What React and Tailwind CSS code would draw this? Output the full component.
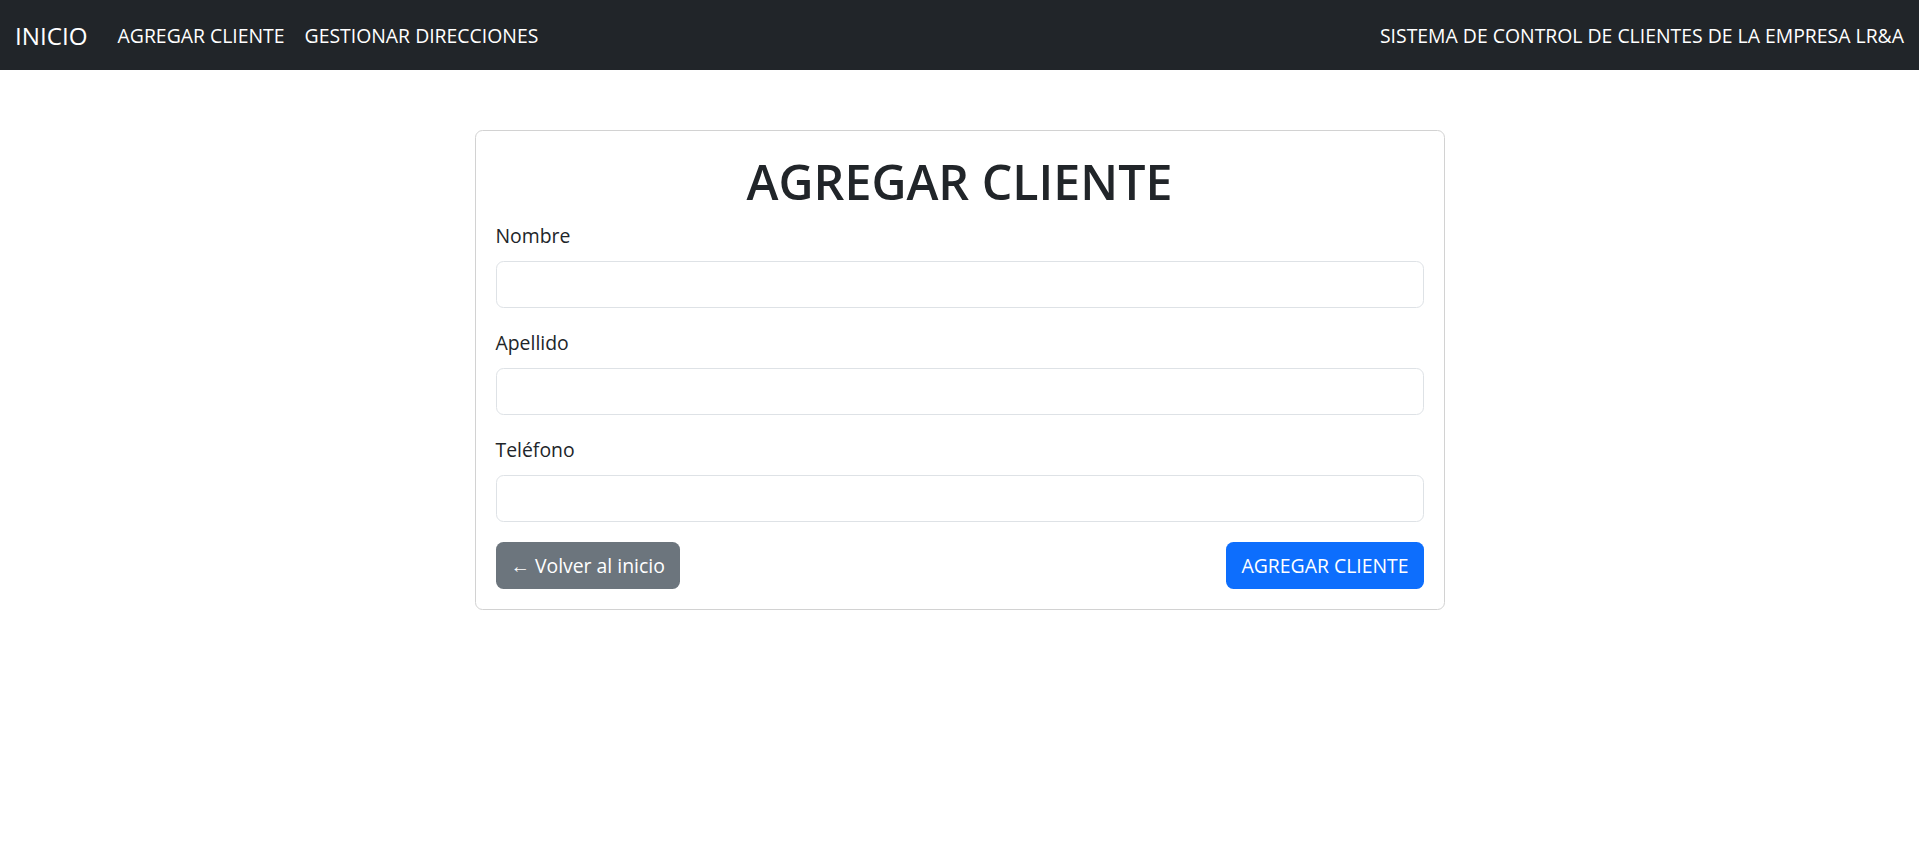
import { useState } from 'react'

const FIELDS = [
  { key: 'nombre', label: 'Nombre' },
  { key: 'apellido', label: 'Apellido' },
  { key: 'telefono', label: 'Teléfono' }
]

export default function App() {
  const [form, setForm] = useState({ nombre: '', apellido: '', telefono: '' })

  function update(key, value) {
    setForm(prev => ({ ...prev, [key]: value }))
  }

  return (
    <div className="min-h-screen bg-white text-[#212529] font-['Open_Sans',sans-serif]">
      {/* Navbar */}
      <nav className="h-[70px] bg-[#212529] flex items-center justify-between px-[15px] pt-[2px]">
        <div className="flex items-center">
          <a href="#" className="text-white text-[24.2px] leading-[1.5] mr-[20px]">INICIO</a>
          <a href="#" className="text-white text-[19.4px] px-[10px]">AGREGAR CLIENTE</a>
          <a href="#" className="text-white text-[19.4px] px-[10px]">GESTIONAR DIRECCIONES</a>
        </div>
        <span className="text-white text-[19.4px]">SISTEMA DE CONTROL DE CLIENTES DE LA EMPRESA LR&amp;A</span>
      </nav>

      {/* Formulario */}
      <div className="w-[970px] mx-auto mt-[60px] border border-[#d2d2d2] rounded-[7.5px] p-[20px]">
        <h1 className="text-[48.3px] font-semibold leading-[60px] text-center mb-[10px]">AGREGAR CLIENTE</h1>

        {FIELDS.map(field => (
          <div key={field.key} className="mb-[20px]">
            <label className="block text-[19.4px] leading-[30px] mb-[10px]">{field.label}</label>
            <input
              type="text"
              value={form[field.key]}
              onChange={e => update(field.key, e.target.value)}
              className="block w-full h-[47px] border border-[#dee2e6] rounded-[7.5px] px-[15px] text-[19.4px] outline-none"
            />
          </div>
        ))}

        <div className="flex justify-between">
          <button className="h-[47px] px-[15px] bg-[#6c757d] text-white text-[19.4px] rounded-[7.5px]">
            ← Volver al inicio
          </button>
          <button className="h-[47px] px-[15px] bg-[#0d6efd] text-white text-[19.4px] rounded-[7.5px]">
            AGREGAR CLIENTE
          </button>
        </div>
      </div>
    </div>
  )
}
